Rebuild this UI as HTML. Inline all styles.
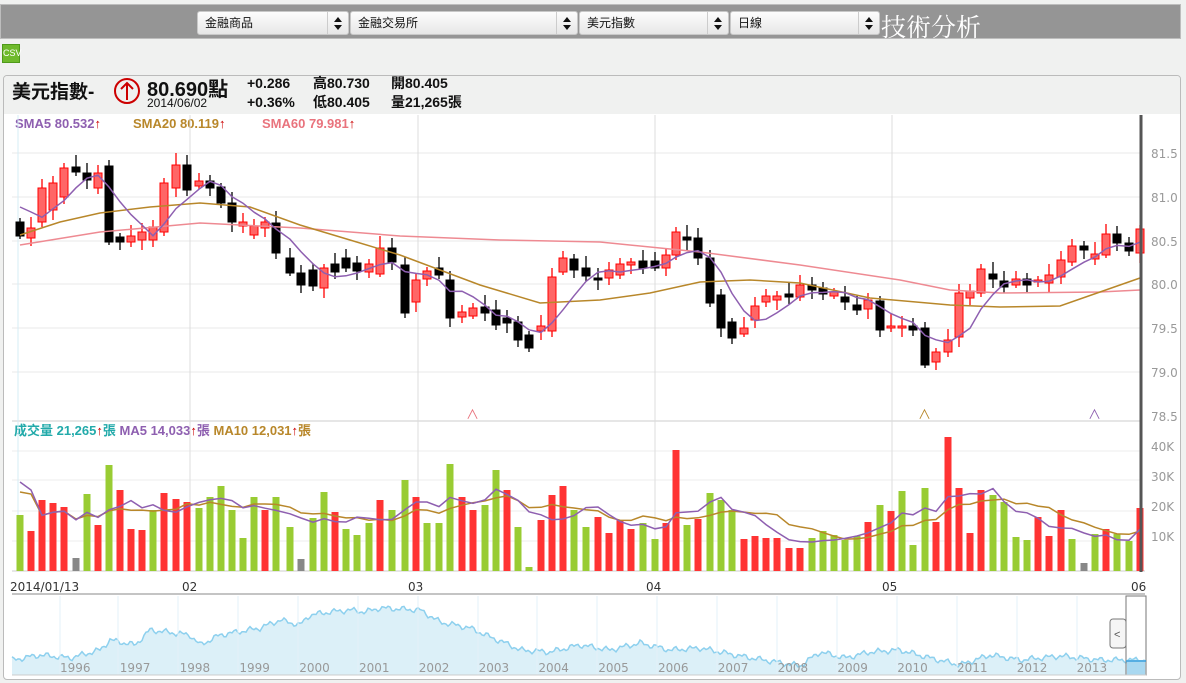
<!DOCTYPE html>
<html><head><meta charset="utf-8">
<style>
*{margin:0;padding:0;box-sizing:border-box}
body{width:1186px;height:683px;background:#f0f1f0;font-family:"Liberation Sans","Noto Sans CJK TC",sans-serif;position:relative;overflow:hidden}
.top{position:absolute;left:0;top:4px;width:1181px;height:35px;background:#959595;border:1px solid #bdbdbd}
.sel{position:absolute;top:6px;height:24px;background:linear-gradient(#fdfdfd,#e6e6e6);border:1px solid #c8c8c8;border-radius:3px;font-size:12px;line-height:22px;padding-left:7px;color:#111}
.sel:after{content:"";position:absolute;right:0;top:0;width:20px;height:22px;border-left:1px solid #ccc}
.sel i{position:absolute;right:6px;top:5px;width:0;height:0;border-left:4px solid transparent;border-right:4px solid transparent;border-bottom:5px solid #111;z-index:2}
.sel b{position:absolute;right:6px;top:13px;width:0;height:0;border-left:4px solid transparent;border-right:4px solid transparent;border-top:5px solid #111;z-index:2}
.title{position:absolute;left:880px;top:3px;color:#fff;font-size:25px;font-family:"Noto Serif CJK SC","Noto Sans CJK TC",serif}
.csv{position:absolute;left:2px;top:44px;width:18px;height:19px;background:#6fba2c;border:1px solid #4f9a1a;color:#fff;font-size:9px;line-height:17px;text-align:center}
.panel{position:absolute;left:3px;top:75px;width:1178px;height:605px;border:1px solid #bbb;border-radius:4px;background:#fff;overflow:hidden}
.head{position:absolute;left:0;top:0;width:100%;height:38px;background:#f0f1f0}
</style></head><body>
<div class="top">
<div class="sel" style="left:196px;width:152px">金融商品<i></i><b></b></div>
<div class="sel" style="left:349px;width:228px">金融交易所<i></i><b></b></div>
<div class="sel" style="left:578px;width:150px">美元指數<i></i><b></b></div>
<div class="sel" style="left:729px;width:150px">日線<i></i><b></b></div>
<div class="title">技術分析</div>
</div>
<div class="csv">CSV</div>
<div class="panel"><div class="head"></div></div>
<svg id="s" width="1186" height="683" style="position:absolute;left:0;top:0" font-family="Liberation Sans, Noto Sans CJK TC, sans-serif">
<text x="12" y="98" font-size="19" fill="#111" font-weight="bold">美元指數-</text>
<circle cx="127" cy="91" r="12" fill="none" stroke="#c00" stroke-width="2"/>
<path d="M127 100V83M121 89L127 83L133 89" fill="none" stroke="#c00" stroke-width="2"/>
<text x="147" y="96" font-size="20" font-weight="bold" fill="#111">80.690<tspan>點</tspan></text>
<text x="147" y="107" font-size="12" fill="#111">2014/06/02</text>
<text x="247" y="88" font-size="14" font-weight="bold" fill="#111">+0.286</text>
<text x="247" y="107" font-size="14" font-weight="bold" fill="#111">+0.36%</text>
<text x="313" y="88" font-size="14" font-weight="bold" fill="#111">高80.730</text>
<text x="313" y="107" font-size="14" font-weight="bold" fill="#111">低80.405</text>
<text x="391" y="88" font-size="14" font-weight="bold" fill="#111">開80.405</text>
<text x="391" y="107" font-size="14" font-weight="bold" fill="#111">量21,265張</text>
<text x="15" y="128" font-size="13" font-weight="bold" fill="#8e5fb0">SMA5 80.532<tspan fill="#c00">↑</tspan></text>
<text x="133" y="128" font-size="13" font-weight="bold" fill="#b8872a">SMA20 80.119<tspan fill="#c00">↑</tspan></text>
<text x="262" y="128" font-size="13" font-weight="bold" fill="#e9737d">SMA60 79.981<tspan fill="#c00">↑</tspan></text>
<text x="14" y="435" font-size="13" font-weight="bold" fill="#2aa"><tspan>成交量 21,265</tspan><tspan fill="#c00">↑</tspan><tspan fill="#2aa">張</tspan> <tspan fill="#8e5fb0">MA5 14,033</tspan><tspan fill="#c00">↑</tspan><tspan fill="#8e5fb0">張</tspan> <tspan fill="#b8872a">MA10 12,031</tspan><tspan fill="#c00">↑</tspan><tspan fill="#b8872a">張</tspan></text>
<g id="g"></g>
</svg>
<script>
var g=document.getElementById('g'),h='';
function L(a){h+=a}
[153,197,241,284,328,372].forEach(function(y){L('<line x1="12" x2="1141" y1="'+y+'" y2="'+y+'" stroke="#e8e8e8"/>')});
L('<line x1="12" x2="1141" y1="421" y2="421" stroke="#ccc"/>');
[451,480,511,541].forEach(function(y){L('<line x1="12" x2="1141" y1="'+y+'" y2="'+y+'" stroke="#eee"/>')});
[18,190,418,655,892].forEach(function(x,i){L('<line x1="'+x+'" x2="'+x+'" y1="115" y2="571" stroke="'+(i?'#ddd':'#d6ecf6')+'"/>')});
L('<line x1="12" x2="1145" y1="571" y2="571" stroke="#ccc"/>');
var yl=[['81.5',153],['81.0',197],['80.5',241],['80.0',284],['79.5',328],['79.0',372],['78.5',416],['40K',446],['30K',476],['20K',506],['10K',536]];
yl.forEach(function(a){L('<text x="1151" y="'+(a[1]+5)+'" font-size="12" fill="#999" font-family="DejaVu Sans">'+a[0]+'</text>')});
var c=[[20,'b',222,236],[31,'r',228,238],[42,'r',188,222],[53,'r',183,210],[64,'r',168,197],[76,'b',167,172],[87,'b',173,180],[98,'r',173,188],[109,'b',166,242],[120,'b',237,242],[131,'r',236,242],[142,'r',232,240],[153,'r',227,240],[164,'r',183,232],[176,'r',165,188],[187,'b',165,190],[199,'r',181,186],[210,'b',181,188],[221,'b',187,203],[232,'b',203,222],[243,'r',222,226],[254,'r',226,235],[265,'r',222,228],[276,'b',223,253],[290,'b',258,273],[301,'b',273,285],[313,'b',270,286],[324,'r',268,288],[335,'b',264,272],[346,'b',258,268],[357,'b',263,271],[369,'r',264,272],[380,'r',248,274],[392,'b',248,262],[405,'b',265,313],[416,'r',280,302],[427,'r',271,279],[439,'b',268,275],[450,'b',280,318],[462,'r',312,317],[473,'r',308,316],[485,'b',307,313],[496,'b',310,325],[507,'b',318,323],[518,'b',322,340],[529,'b',335,348],[541,'r',326,331],[552,'r',277,331],[563,'r',258,272],[574,'b',259,270],[586,'b',268,276],[598,'b',278,280],[609,'r',270,278],[620,'r',264,275],[631,'r',262,265],[643,'b',261,268],[655,'b',261,268],[666,'r',255,268],[676,'r',232,255],[687,'b',237,240],[698,'b',238,258],[710,'b',258,303],[721,'b',295,328],[732,'b',322,338],[744,'r',328,334],[755,'r',306,320],[766,'r',296,302],[777,'r',296,300],[789,'b',294,297],[800,'r',285,297],[812,'b',285,290],[823,'b',288,294],[834,'r',292,296],[845,'b',297,302],[857,'b',305,310],[868,'r',300,309],[880,'b',301,330],[891,'r',326,328],[902,'r',326,328],[913,'b',326,330],[925,'b',328,365],[936,'r',352,362],[948,'r',340,352],[959,'r',293,337],[970,'r',291,298],[981,'r',269,293],[993,'b',274,279],[1004,'b',281,287],[1016,'r',279,285],[1027,'b',279,285],[1038,'r',280,282],[1049,'r',275,283],[1061,'r',260,277],[1072,'r',246,262],[1084,'b',246,250],[1095,'r',254,259],[1106,'r',234,255],[1117,'b',234,243],[1129,'b',243,251],[1140,'r',229,253]];
var closes=[];
c.forEach(function(k,i){var x=k[0],r=k[1]=='r',t=k[2],b=k[3],w1=t-4-(i*7%9),w2=b+3+(i*5%8);
closes.push(r?t:b);
L('<line x1="'+x+'" x2="'+x+'" y1="'+w1+'" y2="'+w2+'" stroke="'+(r?'#f00':'#000')+'" stroke-width="1.3"/>');
L('<rect x="'+(x-4)+'" y="'+t+'" width="8" height="'+Math.max(2,b-t)+'" fill="'+(r?'#f66':'#000')+'" stroke="'+(r?'#f00':'#000')+'"/>');});
function poly(p,col){L('<polyline points="'+p.map(function(a){return a.join(',')}).join(' ')+'" fill="none" stroke="'+col+'" stroke-width="1.5"/>')}
poly([[20,245],[100,232],[200,223],[300,228],[400,236],[500,240],[600,242],[700,252],[800,265],[900,280],[950,290],[1000,293],[1100,292],[1140,290]],'#ee8a92');
poly([[20,235],[60,222],[100,213],[150,207],[200,203],[250,207],[300,225],[350,240],[400,255],[480,285],[540,303],[600,300],[650,293],[700,282],[750,280],[800,283],[870,298],[950,305],[1000,307],[1060,306],[1100,292],[1140,278]],'#b8872a');
var p=[];closes.forEach(function(v,i){var s=0,n=0;for(var j=Math.max(0,i-4);j<=i;j++){s+=closes[j];n++}p.push([c[i][0],(s/n).toFixed(1)])});p[0][1]=207;p[1][1]=212;
poly(p,'#8e5fb0');
L('<line x1="1141" x2="1141" y1="115" y2="572" stroke="#555" stroke-width="3"/>');
L('<text x="466" y="419" font-size="13" fill="#e9737d">∧</text><text x="918" y="419" font-size="13" fill="#b8872a">∧</text><text x="1088" y="419" font-size="13" fill="#8e5fb0">∧</text>');
var v=[['g',515],['r',531],['r',500],['r',503],['r',507],['k',558],['g',494],['r',525],['g',465],['r',490],['r',529],['r',530],['g',510],['r',493],['r',499],['r',502],['g',508],['g',497],['g',486],['g',510],['g',538],['g',497],['r',510],['g',497],['g',527],['k',559],['g',518],['g',492],['r',512],['g',529],['g',535],['g',523],['r',500],['g',510],['g',480],['r',497],['g',523],['g',523],['g',464],['r',497],['r',510],['g',505],['g',470],['r',490],['g',527],['g',567],['r',520],['r',495],['r',486],['g',510],['g',527],['r',517],['r',533],['r',520],['r',529],['g',523],['g',539],['r',523],['r',450],['g',525],['r',519],['g',493],['g',500],['g',510],['r',539],['r',536],['r',538],['r',538],['r',548],['r',548],['g',538],['g',531],['g',535],['g',540],['g',536],['r',522],['g',505],['r',511],['g',491],['g',545],['g',488],['r',522],['r',437],['r',488],['r',533],['r',490],['g',495],['g',502],['g',537],['g',540],['r',517],['r',536],['r',510],['g',539],['k',563],['g',534],['r',529],['g',534],['g',541],['r',508]];
var col={g:'#9c3',r:'#f33',k:'#888'},vm5=[],vm10=[];
v.forEach(function(a,i){var x=c[i][0];L('<rect x="'+(x-3.5)+'" y="'+a[1]+'" width="7" height="'+(571-a[1])+'" fill="'+col[a[0]]+'"/>');
var s=0,n=0;for(var j=Math.max(0,i-4);j<=i;j++){s+=v[j][1];n++}vm5.push([x,(s/n).toFixed(1)]);
s=0;n=0;for(j=Math.max(0,i-9);j<=i;j++){s+=v[j][1];n++}vm10.push([x,(s/n).toFixed(1)]);});
vm5[0][1]=482;vm10[0][1]=492;vm5[1][1]=490;vm10[1][1]=494;
poly(vm10,'#b8872a');poly(vm5,'#8e5fb0');
L('<line x1="1141" x2="1141" y1="421" y2="572" stroke="#555" stroke-width="3"/>');
L('<line x1="12" x2="1145" y1="594" y2="594" stroke="#888"/>');
[['2014/01/13',10],['02',182],['03',408],['04',646],['05',882],['06',1131]].forEach(function(a){L('<text x="'+a[1]+'" y="591" font-size="12" fill="#333" font-family="DejaVu Sans">'+a[0]+'</text>')});
var kp=[[12,660],[40,655],[70,658],[100,650],[110,640],[135,645],[150,630],[190,635],[200,645],[220,635],[260,628],[280,620],[300,625],[310,615],[330,612],[350,610],[365,612],[380,608],[420,610],[440,622],[470,628],[490,637],[510,645],[520,650],[550,652],[580,645],[610,650],[640,643],[670,650],[700,648],[740,656],[770,661],[800,666],[820,652],[845,658],[870,652],[900,650],[930,658],[960,665],[990,655],[1020,660],[1060,656],[1100,660],[1146,660]];
var pts=[];for(var X=12;X<=1146;X+=2){var k=0;while(kp[k+1][0]<X)k++;var a=kp[k],b=kp[k+1],t=(X-a[0])/(b[0]-a[0]);var y=a[1]+(b[1]-a[1])*t+Math.sin(X*0.9)*1.5+Math.sin(X*0.37)*1.8;pts.push(X+','+y.toFixed(1))}
L('<polygon points="12,675 '+pts.join(' ')+' 1146,675" fill="#dcf0f8"/>');
L('<polyline points="'+pts.join(' ')+'" fill="none" stroke="#8dd0ee" stroke-width="1.5"/>');
[60,118,178,238,298,358,418,478,537,597,657,717,777,837,897,957,1017,1077].forEach(function(x){L('<line x1="'+x+'" x2="'+x+'" y1="596" y2="675" stroke="#e3f1f8"/>')});
['1996','1997','1998','1999','2000','2001','2002','2003','2004','2005','2006','2007','2008','2009','2010','2011','2012','2013'].forEach(function(s,i){L('<text x="'+(60+i*59.8)+'" y="672" font-size="12" fill="#999" font-family="DejaVu Sans">'+s+'</text>')});
L('<rect x="1126" y="596" width="20" height="79" fill="none" stroke="#777"/>');
L('<rect x="1127" y="660" width="18" height="15" fill="#a9d8f0"/>');
L('<line x1="1126" x2="1146" y1="661" y2="661" stroke="#3aa0dd" stroke-width="1.5"/>');
L('<rect x="1110" y="619" width="16" height="29" rx="3" fill="#f5f5f5" stroke="#777"/><text x="1114" y="638" font-size="11" fill="#555">&lt;</text>');
L('<line x1="12" x2="1146" y1="675" y2="675" stroke="#ccc"/>');
g.innerHTML=h;
</script>
</body></html>
